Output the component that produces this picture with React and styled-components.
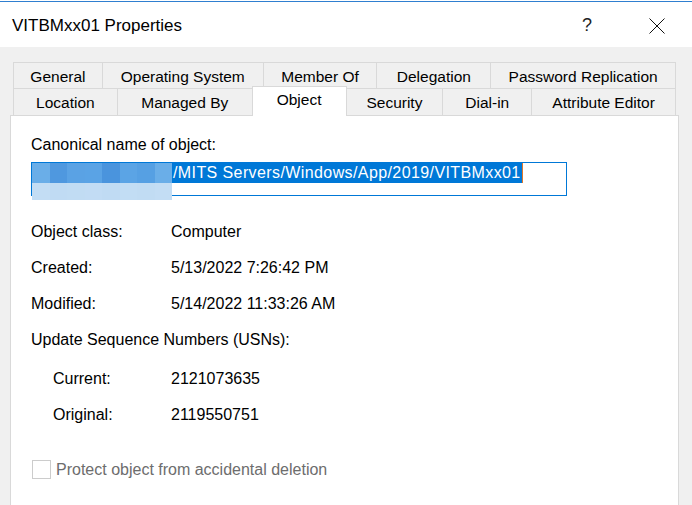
import React from "react";
import styled, { createGlobalStyle } from "styled-components";

const Global = createGlobalStyle`
  html, body { margin: 0; padding: 0; background: #f0f0f0; }
  body { font-family: "Liberation Sans", Arial, sans-serif; }
`;

const Window = styled.div`
  width: 692px;
  height: 505px;
  overflow: hidden;
  display: flex;
  flex-direction: column;
  background: #f0f0f0;
  color: #000;
`;

const TopEdge = styled.div`
  height: 1px;
  background: #fff;
  flex: none;
`;

const AccentLine = styled.div`
  height: 1px;
  background: #2f7fd0;
  flex: none;
`;

const TitleBar = styled.div`
  height: 45px;
  flex: none;
  background: #fff;
  display: flex;
  align-items: center;
  padding-left: 12px;
  padding-right: 20px;
  gap: 40px;
`;

const Title = styled.div`
  flex: 1;
  font-size: 17px;
  line-height: 20px;
  margin-top: 2px;
`;

const CaptionButton = styled.div`
  width: 30px;
  height: 45px;
  display: flex;
  align-items: center;
  justify-content: center;
  font-size: 18px;
  color: #222;
  margin-top: 2px;
`;

const Body = styled.div`
  flex: 1;
  display: flex;
  flex-direction: column;
  padding: 15px 13px 0 10px;
  min-height: 0;
`;

const TabRows = styled.div`
  margin: 0 3px;
  display: flex;
  flex-direction: column;
`;

const TabRow = styled.div`
  display: flex;
  align-items: flex-end;
  height: ${(p) => p.$h}px;
`;

const Tab = styled.div`
  box-sizing: border-box;
  width: ${(p) => p.$w}px;
  height: ${(p) => (p.$active ? p.$h + 3 : p.$h)}px;
  margin-left: ${(p) => (p.$first ? 0 : -1)}px;
  margin-bottom: ${(p) => (p.$active ? -1 : 0)}px;
  border: 1px solid #d9d9d9;
  border-bottom: none;
  background: ${(p) => (p.$active ? "#fff" : "#f0f0f0")};
  position: relative;
  z-index: ${(p) => (p.$active ? 2 : 1)};
  display: flex;
  align-items: center;
  justify-content: center;
  padding-top: ${(p) => (p.$active ? 0 : 2)}px;
  padding-bottom: ${(p) => (p.$active ? 3 : 0)}px;
  font-size: 15.5px;
  white-space: nowrap;
`;

const Panel = styled.div`
  flex: 1;
  background: #fff;
  border: 1px solid #d9d9d9;
  border-bottom: none;
  padding: 20px 20px 0 20px;
  font-size: 16px;
  display: flex;
  flex-direction: column;
`;

const FieldLabel = styled.div`
  line-height: 18px;
`;

const TextBox = styled.div`
  box-sizing: border-box;
  margin-top: 8px;
  width: 536px;
  height: 34px;
  border: 1px solid #0078d7;
  background: #fff;
  position: relative;
`;

const Selection = styled.span`
  display: inline-flex;
  align-items: center;
  height: 20px;
  background: #0078d7;
  color: #fff;
  white-space: nowrap;
  border-right: 1px solid #e0782a;
  padding-right: 1px;
  letter-spacing: 0.4px;
`;

const Redacted = styled.span`
  display: inline-block;
  width: 140px;
  height: 20px;
  margin-right: 1px;
  position: relative;
`;

const RedactTop = styled.span`
  position: absolute;
  left: 0;
  top: 0;
  width: 140px;
  height: 20px;
  display: flex;
`;

const Block = styled.span`
  flex: 1;
  background: ${(p) => p.$c};
`;

const RedactBottom = styled.span`
  position: absolute;
  left: 0;
  top: 20px;
  width: 140px;
  height: 17px;
  display: flex;
  z-index: 3;
`;

const InfoList = styled.div`
  margin-top: 18px;
  display: flex;
  flex-direction: column;
`;

const InfoRow = styled.div`
  display: grid;
  grid-template-columns: ${(p) => (p.$indent ? 118 : 140)}px 1fr;
  padding-left: ${(p) => (p.$indent ? 22 : 0)}px;
  height: 36px;
  align-items: center;
  margin-top: ${(p) => p.$mt || 0}px;
`;

const Heading = styled.span`
  grid-column: 1 / -1;
  white-space: nowrap;
`;

const CheckRow = styled.label`
  margin-top: 27px;
  display: flex;
  align-items: center;
  color: #6d6d6d;
`;

const CheckBox = styled.span`
  box-sizing: border-box;
  width: 19px;
  height: 19px;
  margin-left: 1px;
  border: 1px solid #cccccc;
  background: #fff;
  margin-right: 5px;
`;

const row1 = [
  ["General", 90],
  ["Operating System", 162],
  ["Member Of", 115],
  ["Delegation", 115],
  ["Password Replication", 186],
];

const row2 = [
  ["Location", 105],
  ["Managed By", 136],
  ["Object", 95, true],
  ["Security", 98],
  ["Dial-in", 90],
  ["Attribute Editor", 145],
];

const topBlocks = ["#6aaee8", "#4f98df", "#5aa2e4", "#5aa3e5", "#4a94dd", "#5ba4e5", "#56a0e3", "#6aaee8"];
const bottomBlocks = ["#c3ddf4", "#c0dbf3", "#c1dcf3", "#c2dcf4", "#c0dbf3", "#c2ddf4", "#c1dcf3", "#c3ddf4"];

export default function App() {
  return (
    <>
      <Global />
      <Window>
        <TopEdge />
        <AccentLine />
        <TitleBar>
          <Title>VITBMxx01 Properties</Title>
          <CaptionButton>?</CaptionButton>
          <CaptionButton>
            <svg width="16" height="16" viewBox="0 0 16 16">
              <path d="M0.5 0.5 L15.5 15.5 M15.5 0.5 L0.5 15.5" stroke="#111" strokeWidth="1" fill="none" />
            </svg>
          </CaptionButton>
        </TitleBar>
        <Body>
          <TabRows>
            <TabRow $h={26}>
              {row1.map(([t, w], i) => (
                <Tab key={t} $w={w} $h={26} $first={i === 0}>
                  {t}
                </Tab>
              ))}
            </TabRow>
            <TabRow $h={27}>
              {row2.map(([t, w, a], i) => (
                <Tab key={t} $w={w} $h={27} $first={i === 0} $active={a}>
                  {t}
                </Tab>
              ))}
            </TabRow>
          </TabRows>
          <Panel>
            <FieldLabel>Canonical name of object:</FieldLabel>
            <TextBox>
              <Selection>
                <Redacted>
                  <RedactTop>
                    {topBlocks.map((c, i) => (
                      <Block key={i} $c={c} />
                    ))}
                  </RedactTop>
                  <RedactBottom>
                    {bottomBlocks.map((c, i) => (
                      <Block key={i} $c={c} />
                    ))}
                  </RedactBottom>
                </Redacted>
                /MITS Servers/Windows/App/2019/VITBMxx01
              </Selection>
            </TextBox>
            <InfoList>
              <InfoRow>
                <span>Object class:</span>
                <span>Computer</span>
              </InfoRow>
              <InfoRow>
                <span>Created:</span>
                <span>5/13/2022 7:26:42 PM</span>
              </InfoRow>
              <InfoRow>
                <span>Modified:</span>
                <span>5/14/2022 11:33:26 AM</span>
              </InfoRow>
              <InfoRow>
                <Heading>Update Sequence Numbers (USNs):</Heading>
              </InfoRow>
              <InfoRow $indent $mt={3}>
                <span>Current:</span>
                <span>2121073635</span>
              </InfoRow>
              <InfoRow $indent>
                <span>Original:</span>
                <span>2119550751</span>
              </InfoRow>
            </InfoList>
            <CheckRow>
              <CheckBox />
              Protect object from accidental deletion
            </CheckRow>
          </Panel>
        </Body>
      </Window>
    </>
  );
}
